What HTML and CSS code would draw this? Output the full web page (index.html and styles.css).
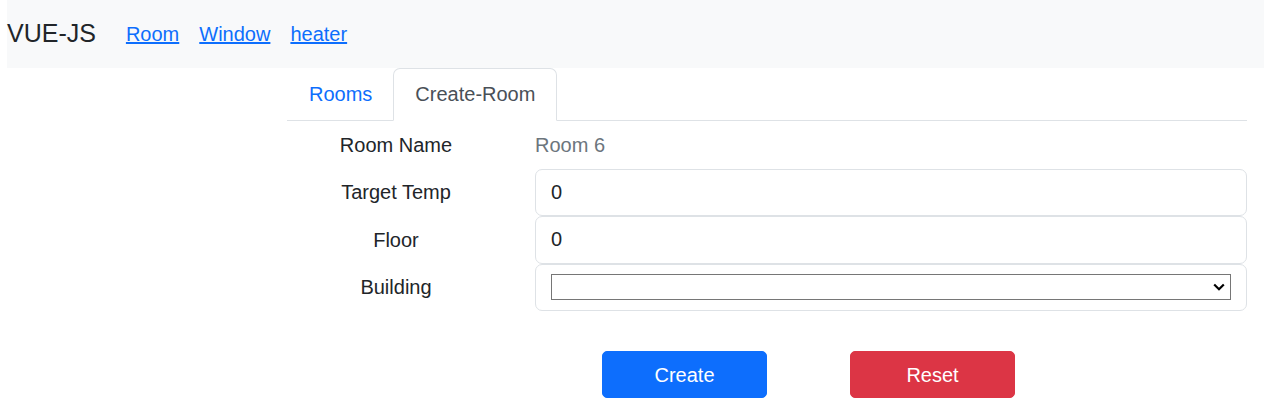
FILE: index.html
```html
<!DOCTYPE html>
<html lang="en">
<head>
<meta charset="utf-8">
<title>VUE-JS</title>
<link rel="stylesheet" href="styles.css">
</head>
<body>
<nav class="navbar">
  <span class="brand">VUE-JS</span>
  <a class="nav-link" href="#">Room</a>
  <a class="nav-link" href="#">Window</a>
  <a class="nav-link" href="#">heater</a>
</nav>
<main class="main">
  <ul class="tabs">
    <li><a class="tab" href="#">Rooms</a></li>
    <li><a class="tab active" href="#">Create-Room</a></li>
  </ul>
  <form class="form">
    <div class="row">
      <label class="label">Room Name</label>
      <div class="plain">Room 6</div>
    </div>
    <div class="row">
      <label class="label">Target Temp</label>
      <input class="control" type="text" value="0">
    </div>
    <div class="row">
      <label class="label">Floor</label>
      <input class="control" type="text" value="0">
    </div>
    <div class="row">
      <label class="label">Building</label>
      <div class="control select-box">
        <div class="select-wrap">
          <select class="select"><option></option></select>
          <svg class="chevron" width="12" height="8" viewBox="0 0 12 8" aria-hidden="true"><path d="M1.2 1.5 L6 6.2 L10.8 1.5" fill="none" stroke="#000" stroke-width="2.2"/></svg>
        </div>
      </div>
    </div>
    <div class="actions">
      <button type="button" class="btn btn-primary">Create</button>
      <button type="button" class="btn btn-danger">Reset</button>
    </div>
  </form>
</main>
</body>
</html>
```
FILE: styles.css
```css
* { box-sizing: border-box; }
html, body {
  margin: 0;
  padding: 0;
  background: #fff;
  font-family: "Liberation Sans", Arial, sans-serif;
  font-size: 20px;
  line-height: 1.5;
  color: #212529;
}
.navbar {
  margin-left: 7px;
  height: 68px;
  background: #f8f9fa;
  display: flex;
  align-items: center;
  gap: 20px;
}
.brand {
  font-size: 25px;
  color: #212529;
  margin-right: 10px;
}
.nav-link {
  color: #0d6efd;
  text-decoration: underline;
}
.main {
  margin-left: 287px;
  width: 960px;
}
.tabs {
  list-style: none;
  margin: 0;
  padding: 0;
  display: flex;
  border-bottom: 1px solid #dee2e6;
}
.tabs li { margin-bottom: -1px; }
.tab {
  display: block;
  padding: 10px 21px 11px 21px;
  border: 1px solid transparent;
  border-top-left-radius: 7px;
  border-top-right-radius: 7px;
  color: #0d6efd;
  text-decoration: none;
}
.tabs li:first-child .tab { padding-right: 20px; }
.tab.active {
  color: #495057;
  background: #fff;
  border-color: #dee2e6 #dee2e6 #fff;
}
.form { margin: 0; }
.row {
  display: grid;
  grid-template-columns: 218px 712px;
  column-gap: 30px;
  align-items: center;
  height: 47.5px;
}
.label {
  text-align: center;
  color: #212529;
}
.plain {
  color: #6c757d;
}
.control {
  display: block;
  width: 712px;
  height: 47.5px;
  padding: 0 15px;
  font: inherit;
  color: #212529;
  background: #fff;
  border: 1px solid #dee2e6;
  border-radius: 7px;
  outline: none;
}
.select-box {
  display: flex;
  align-items: center;
}
.select-wrap {
  position: relative;
  width: 100%;
  height: 26px;
}
.select {
  display: block;
  width: 100%;
  height: 26px;
  font-family: inherit;
  font-size: 20px;
  margin: 0;
  border: 1px solid #767676;
  border-radius: 0;
  background: #fff;
  color: #212529;
  appearance: none;
  -webkit-appearance: none;
}
.chevron {
  position: absolute;
  right: 6px;
  top: 9px;
  pointer-events: none;
}
.actions {
  display: flex;
  gap: 83px;
  margin-top: 40px;
  padding-left: 315px;
}
.btn {
  width: 165px;
  height: 47px;
  font: inherit;
  color: #fff;
  border: 1px solid transparent;
  border-radius: 5px;
  cursor: pointer;
}
.btn-primary { background: #0d6efd; border-color: #0d6efd; }
.btn-danger { background: #dc3545; border-color: #dc3545; }
```
